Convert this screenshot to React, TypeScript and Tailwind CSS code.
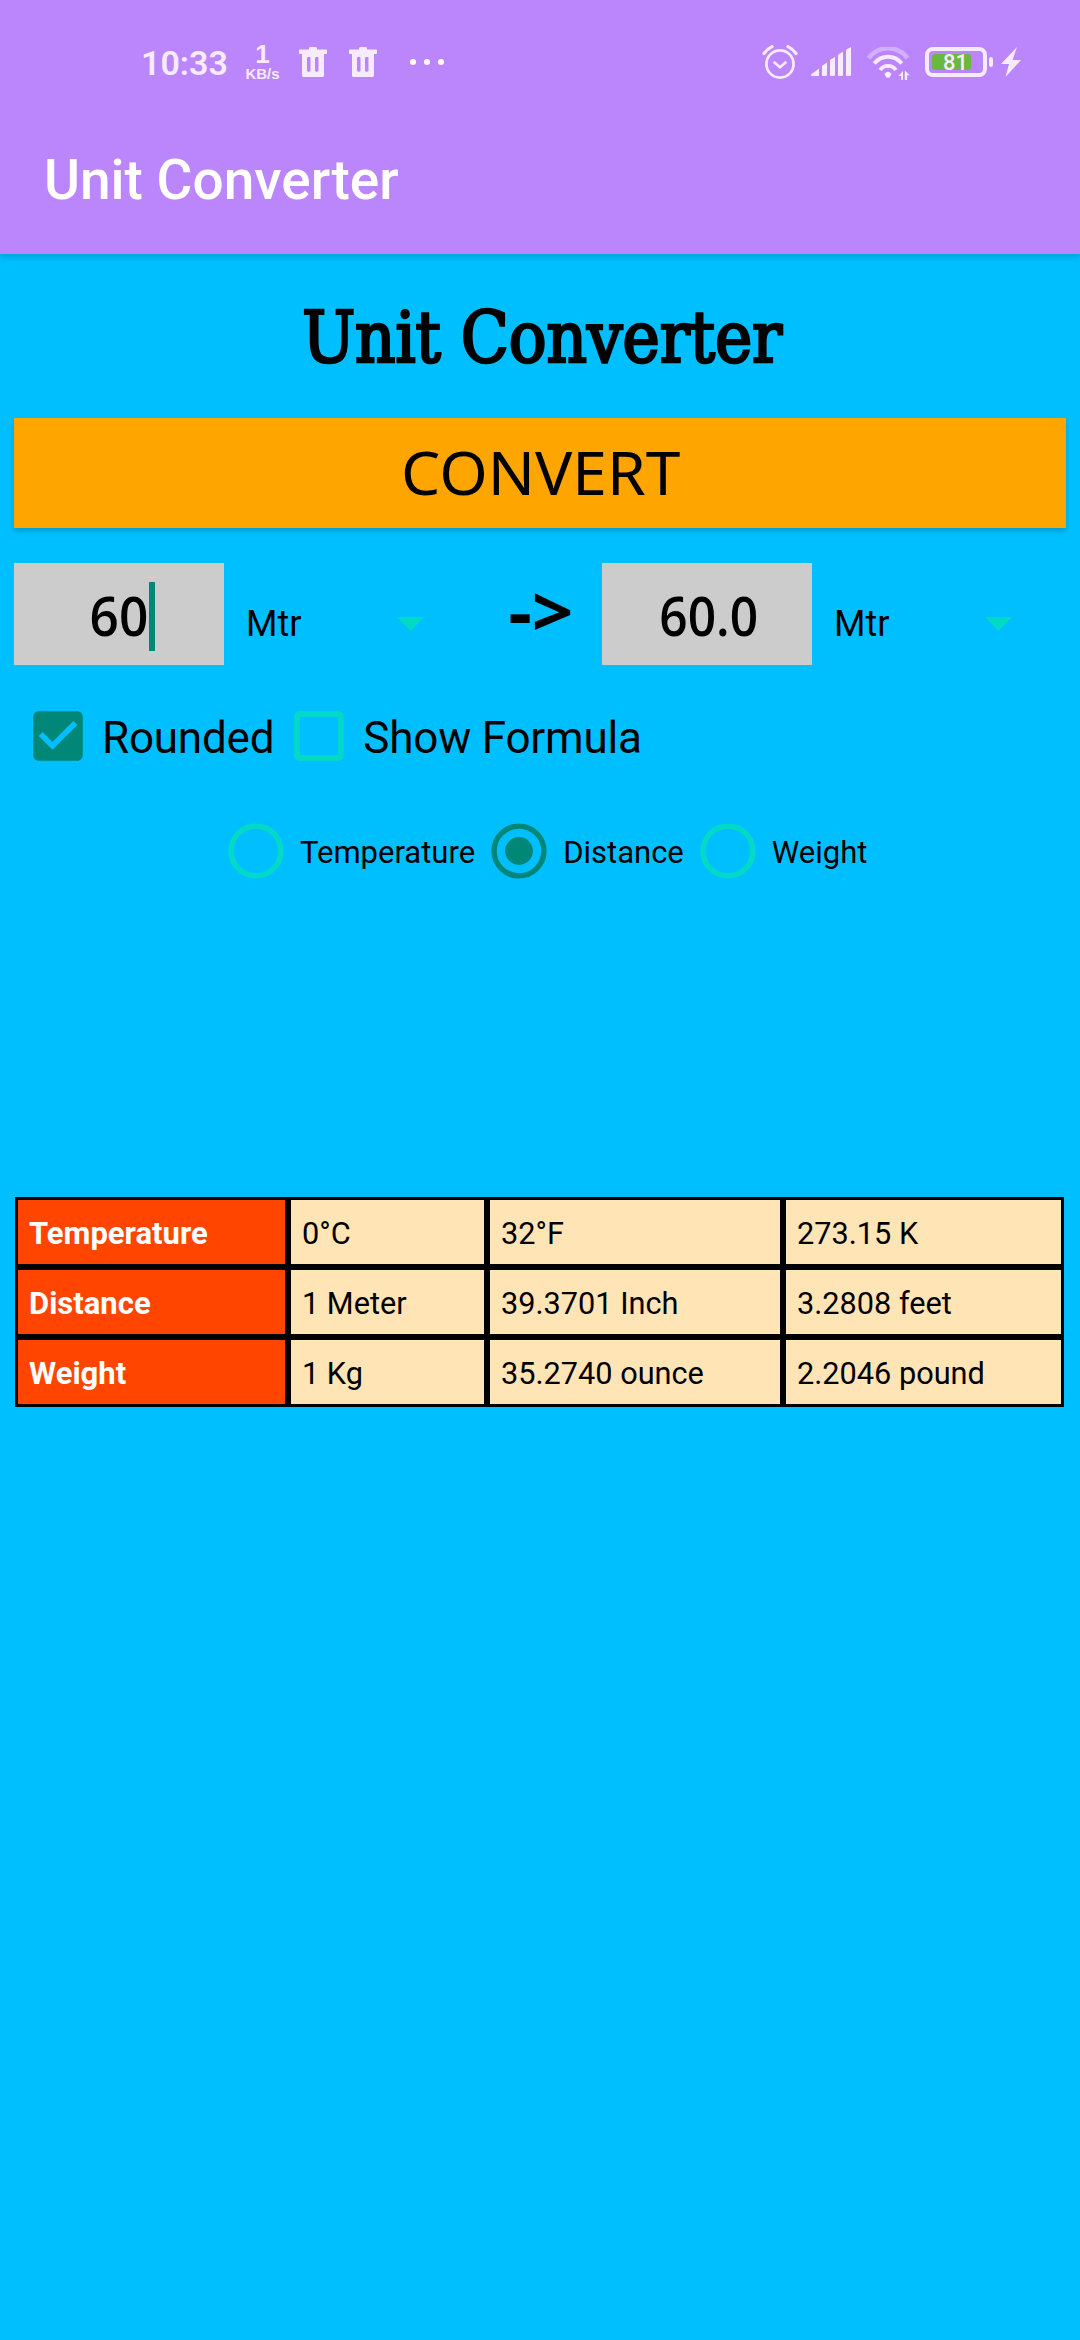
import React from "react";

const ICON = "#f6ebff";

function Trash() {
  return (
    <svg width="28" height="30" viewBox="0 0 28 30" fill={ICON} className="block">
      <path
        fillRule="evenodd"
        d="M10 2.5V1.5C10 .7 10.700 0 11.500 0h5c.8 0 1.500.7 1.500 1.500v1H27c.6 0 1 .5 1 1v2.500c0 .6-.4 1-1 1h-2V28.500c0 .8-.7 1.500-1.500 1.500h-19c-.8 0-1.500-.7-1.500-1.500V7H1c-.6 0-1-.4-1-1V3.500c0-.5.4-1 1-1zM9.200 10c-.7 0-1.200.5-1.200 1.200v12.300c0 .7.5 1.200 1.200 1.200h1.100c.7 0 1.200-.5 1.200-1.200V11.200c0-.7-.5-1.200-1.200-1.200zM17.200 10c-.7 0-1.200.5-1.200 1.200v12.300c0 .7.5 1.200 1.200 1.200h1.100c.7 0 1.200-.5 1.200-1.200V11.200c0-.7-.5-1.200-1.200-1.200z"
      />
    </svg>
  );
}

function Alarm() {
  return (
    <svg width="36" height="35" viewBox="0 0 36 35" fill="none" stroke={ICON} className="block">
      <circle cx="18" cy="19" r="13.600" strokeWidth="2.700" />
      <path d="M12.500 17.500l5.500 4.800 5.500-4.800" strokeWidth="2.600" strokeLinecap="round" strokeLinejoin="round" />
      <path d="M2 8.500Q5 4 10 1.600M34 8.500Q31 4 26 1.600" strokeWidth="3.200" strokeLinecap="round" />
    </svg>
  );
}

function Signal() {
  return (
    <svg width="41" height="30" viewBox="0 0 41 30" fill={ICON} className="block">
      <path d="M0 27.500L8 21.500V29H1Q0 29 0 27.500zM11 19.500Q11 19 11.500 18.500L16 15.500V28Q16 29 15 29H12Q11 29 11 28zM19 13.500Q19 13 19.500 12.500L24 10V28Q24 29 23 29H20Q19 29 19 28zM27 8.500Q27 8 27.500 7.500L32 4.500V28Q32 29 31 29H28Q27 29 27 28zM35 3.500Q35 3 35.500 2.500L40 0V28Q40 29 39 29H36Q35 29 35 28z" />
    </svg>
  );
}

function Wifi() {
  return (
    <svg width="43" height="34" viewBox="0 0 43 34" fill="none" className="block">
      <path d="M1.500 11C12-2 30-2 40.500 11" stroke="#d2b0fe" strokeWidth="4.500" />
      <path d="M7.300 16.500C14.500 7.500 27.500 7.500 34.700 16.500" stroke={ICON} strokeWidth="3.800" />
      <path d="M13 23C17 17.500 25 17.500 29 23" stroke={ICON} strokeWidth="3.600" />
      <path d="M17.500 27Q21 22.500 24.500 27Q23.800 30 21 31Q18.200 30 17.500 27z" fill={ICON} />
      <path d="M36 24v9h-1.800v-4H31.500zM37.800 33v-9.500l5 4.800h-2.700v4.700z" fill={ICON} />
    </svg>
  );
}

function Battery() {
  return (
    <div className="relative h-[30px] w-[68px]">
      <div className="h-[30px] w-[62px] rounded-[8px] border-[4px] border-[#f6ebff] p-[3px]">
        <div className="h-[16px] w-[39px] rounded-[3px] bg-[#69b840]" />
      </div>
      <div className="absolute top-[10px] left-[64px] h-[10px] w-[4px] rounded-[2px] bg-[#f6ebff]" />
      <span className="absolute top-[1px] left-[18px] text-[22px] leading-[30px] font-medium text-[#f6ebff]">81</span>
    </div>
  );
}

function StatusBar() {
  return (
    <div className="flex h-[124px] items-center pl-[141px] text-[#f6ebff]">
      <span className="w-[104px] pt-[1px] text-[34px] leading-[40px] font-semibold">10:33</span>
      <div className="flex w-[35px] flex-col items-center pt-[1px] font-['Liberation_Sans',sans-serif] font-bold">
        <span className="text-[26px] leading-[19px]">1</span>
        <span className="pt-[3px] text-[15px] leading-[13px]">KB/s</span>
      </div>
      <div className="ml-[19px] flex gap-[22px]">
        <Trash />
        <Trash />
      </div>
      <div className="ml-[33px] flex gap-[8px]">
        <i className="h-[6px] w-[6px] rounded-full bg-white" />
        <i className="h-[6px] w-[6px] rounded-full bg-white" />
        <i className="h-[6px] w-[6px] rounded-full bg-white" />
      </div>
      <div className="ml-[318px] flex items-center">
        <Alarm />
        <div className="ml-[13px]"><Signal /></div>
        <div className="ml-[15px] pt-[3px]"><Wifi /></div>
        <div className="ml-[15px]"><Battery /></div>
        <svg width="20" height="30" viewBox="0 0 20 30" fill={ICON} className="ml-[8px] block">
          <path d="M16 0L0 17h8L4.500 30 20 13h-8.500z" />
        </svg>
      </div>
    </div>
  );
}

function Checkbox({ checked, label }: { checked?: boolean; label: string }) {
  return (
    <label className="flex items-center">
      <svg width="66" height="66" viewBox="0 0 24 24" className="block">
        {checked ? (
          <path fill="#018777" d="M19 3H5c-1.110 0-2 .9-2 2v14c0 1.100.89 2 2 2h14c1.110 0 2-.9 2-2V5c0-1.100-.89-2-2-2zm-9 14l-5-5 1.410-1.410L10 14.170l7.590-7.590L19 8l-9 9z" />
        ) : (
          <path fill="#03dac5" d="M19 5v14H5V5h14m0-2H5c-1.100 0-2 .9-2 2v14c0 1.100.9 2 2 2h14c1.100 0 2-.9 2-2V5c0-1.100-.9-2-2-2z" />
        )}
      </svg>
      <span className="ml-[11px] pt-[4px] text-[44px] leading-[52px] tracking-[-0.2px]">{label}</span>
    </label>
  );
}

function Radio({ checked, label }: { checked?: boolean; label: string }) {
  return (
    <label className="flex items-center">
      <svg width="56" height="56" viewBox="0 0 56 56" className="block">
        <circle cx="28" cy="28" r="24.900" fill="none" strokeWidth="5.400" stroke={checked ? "#018777" : "#03dac5"} />
        {checked && <circle cx="28" cy="28" r="13.900" fill="#018777" />}
      </svg>
      <span className="ml-[16px] pt-[3px] text-[31px] leading-[36px]">{label}</span>
    </label>
  );
}

function Spinner() {
  return (
    <div className="flex h-full w-[201px] items-center justify-between pl-[22px] pt-[19px]">
      <span className="text-[36px] leading-[42px]">Mtr</span>
      <svg width="28" height="14" viewBox="0 0 28 14" className="mb-[-1px] block">
        <path d="M0 0h27L13.500 14z" fill="#03dac5" />
      </svg>
    </div>
  );
}

const rows = [
  ["Temperature", "0°C", "32°F", "273.15 K"],
  ["Distance", "1 Meter", "39.3701 Inch", "3.2808 feet"],
  ["Weight", "1 Kg", "35.2740 ounce", "2.2046 pound"],
];

export default function App() {
  return (
    <div className="flex h-[2340px] w-[1080px] flex-col overflow-hidden bg-[#00bfff] font-['Roboto',sans-serif] text-black">
      <header className="h-[254px] bg-[#bb86fc] shadow-[0_2px_8px_rgba(0,0,0,0.2)]">
        <StatusBar />
        <div className="flex h-[112px] items-center pl-[44px]">
          <span className="text-[55px] leading-[64px] font-medium text-white">Unit Converter</span>
        </div>
      </header>

      <main className="flex flex-col px-[14px]">
        <h1 className="flex h-[164px] items-center justify-center pt-[4px] pl-[4px] text-center">
          <span className="inline-block scale-x-[0.983] font-['DejaVu_Serif_Condensed','DejaVu_Serif',serif] text-[71px] leading-[90px] font-normal whitespace-nowrap [-webkit-text-stroke:2.6px_black]">
            Unit Converter
          </span>
        </h1>

        <button className="flex h-[110px] items-center justify-center bg-[#ffa500] shadow-[0_3px_5px_rgba(0,0,0,0.2)]">
          <span className="inline-block scale-x-[1.037] pb-[3px] pl-[2px] font-['Noto_Sans',sans-serif] text-[60px] leading-[80px]">CONVERT</span>
        </button>

        <div className="mt-[35px] flex h-[102px]">
          <div className="flex w-[210px] items-center justify-center bg-[#cccccc] pt-[2px]">
            <span className="relative font-['Open_Sans',sans-serif] text-[54px] leading-[70px] font-semibold">
              <span className="inline-block scale-x-95">60</span>
              <i className="absolute top-[2px] right-[-5px] h-[69px] w-[6px] bg-[#018777]" />
            </span>
          </div>
          <Spinner />
          <div className="flex w-[177px] items-center justify-end pr-[29px] pb-[8px] font-['Noto_Sans',sans-serif] text-[70px] leading-[80px] font-bold">
            <span className="inline-block origin-right scale-x-[1.04]">-&gt;</span>
          </div>
          <div className="flex w-[210px] items-center justify-center bg-[#cccccc] pt-[2px] pl-[3px] font-['Open_Sans',sans-serif] text-[54px] leading-[70px] font-semibold">
            <span className="inline-block scale-x-[0.92]">60.0</span>
          </div>
          <Spinner />
        </div>

        <div className="mt-[38px] flex pl-[11px]">
          <Checkbox checked label="Rounded" />
          <div className="ml-[12px]">
            <Checkbox label="Show Formula" />
          </div>
        </div>

        <div className="mt-[54px] flex gap-[16px] pl-[214px]">
          <Radio label="Temperature" />
          <Radio checked label="Distance" />
          <Radio label="Weight" />
        </div>

        <div className="mt-[318px] ml-px w-[1049px]">
          {rows.map((r) => (
            <div key={r[0]} className="grid h-[70px] grid-cols-[273px_199px_296px_281px] leading-[36px]">
              {r.map((c, i) => (
                <div
                  key={c}
                  className={
                    i === 0
                      ? "flex items-center border-[3px] border-black bg-[#ff4500] pt-[4px] pl-[11px] text-[31px] font-bold text-white"
                      : "flex items-center border-[3px] border-black bg-[#ffe4b5] pt-[4px] pl-[11px] text-[30.7px]"
                  }
                >
                  {c}
                </div>
              ))}
            </div>
          ))}
        </div>
      </main>
    </div>
  );
}
